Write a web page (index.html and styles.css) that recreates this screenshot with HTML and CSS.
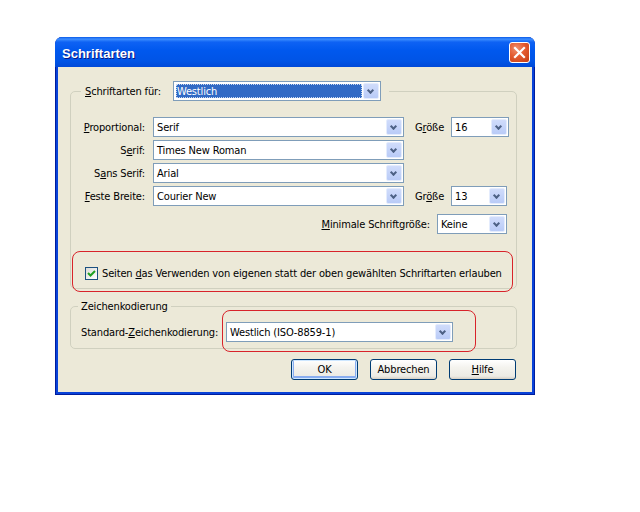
FILE: index.html
```html
<!DOCTYPE html>
<html lang="de">
<head>
  <meta charset="UTF-8">
  <title>Schriftarten</title>
  <link rel="stylesheet" href="styles.css">
</head>
<body>
  <div class="window">
    <div class="titlebar">
      <span class="title">Schriftarten</span>
      <span class="close-btn">
        <svg width="13" height="13" viewBox="0 0 13 13"><path d="M2 2 L11 11 M11 2 L2 11" stroke="#fff" stroke-width="2.2" stroke-linecap="square"/></svg>
      </span>
    </div>
    <div class="client">
      <fieldset class="group group-fonts">
        <legend class="legend-combo">
          <span class="lbl"><u>S</u>chriftarten für:</span>
          <div class="combo combo-lang focused"><span class="val"><span class="sel-text">Westlich</span></span><span class="drop"></span></div>
        </legend>
        <div class="font-grid">
          <span class="lbl right"><u>P</u>roportional:</span>
          <div class="combo combo-font"><span class="val">Serif</span><span class="drop"></span></div>
          <span class="lbl size-lbl">G<u>r</u>öße</span>
          <div class="combo combo-size"><span class="val">16</span><span class="drop"></span></div>

          <span class="lbl right">S<u>e</u>rif:</span>
          <div class="combo combo-font"><span class="val">Times New Roman</span><span class="drop"></span></div>
          <span></span><span></span>

          <span class="lbl right">S<u>a</u>ns Serif:</span>
          <div class="combo combo-font"><span class="val">Arial</span><span class="drop"></span></div>
          <span></span><span></span>

          <span class="lbl right"><u>F</u>este Breite:</span>
          <div class="combo combo-font"><span class="val">Courier New</span><span class="drop"></span></div>
          <span class="lbl size-lbl">Gr<u>ö</u>ße</span>
          <div class="combo combo-size small"><span class="val">13</span><span class="drop"></span></div>
        </div>
        <div class="min-row">
          <span class="lbl"><u>M</u>inimale Schriftgröße:</span>
          <div class="combo combo-min"><span class="val">Keine</span><span class="drop"></span></div>
        </div>
        <div class="check-row">
          <span class="checkbox">
            <svg width="9" height="9" viewBox="0 0 9 9"><path d="M1 4 L3.5 6.5 L8 2" fill="none" stroke="#21a121" stroke-width="2"/></svg>
          </span>
          <span class="lbl">Seiten <u>d</u>as Verwenden von eigenen statt der oben gewählten Schriftarten erlauben</span>
        </div>
      </fieldset>

      <fieldset class="group group-enc">
        <legend class="legend-text">Zeichenkodierung</legend>
        <div class="enc-row">
          <span class="lbl">Standard-<u>Z</u>eichenkodierung:</span>
          <div class="combo combo-enc"><span class="val">Westlich (ISO-8859-1)</span><span class="drop"></span></div>
        </div>
      </fieldset>

      <div class="buttons">
        <button class="btn default">OK</button>
        <button class="btn">Abbrechen</button>
        <button class="btn"><u>H</u>ilfe</button>
      </div>

      <!-- red markers drawn over the dialog -->
      <div class="mark mark-check"></div>
      <div class="mark mark-enc"></div>
    </div>
  </div>
</body>
</html>
```

FILE: styles.css
```css
body {
  margin: 0;
  padding: 37px 0 0 55px;
  background: #fff;
  font-family: "DejaVu Sans Condensed", "DejaVu Sans", sans-serif;
  font-stretch: condensed;
  font-size: 11px;
  letter-spacing: -0.15px;
  color: #000;
}
.window {
  width: 480px;
  height: 358px;
  box-sizing: border-box;
  background: #0842d8;
  border: 1px solid #001c9c;
  border-top: none;
  border-radius: 7px 7px 0 0;
  padding: 0 2px 2px 2px;
  display: flex;
  flex-direction: column;
}
.titlebar {
  height: 30px;
  margin: 0 -3px;
  border-radius: 7px 7px 0 0;
  background: linear-gradient(to bottom, #0a5ae8 0%, #3d8eff 7%, #0e62f4 17%, #0058ee 45%, #0054e6 80%, #0049d8 100%);
  display: flex;
  align-items: center;
  justify-content: space-between;
  padding: 0 5px 0 7px;
  box-sizing: border-box;
}
.title {
  font-family: "Liberation Sans", Arial, sans-serif;
  font-weight: bold;
  font-size: 13px;
  letter-spacing: 0;
  color: #fff;
  text-shadow: 1px 1px 0 #0a1883;
  padding-top: 2px;
}
.close-btn {
  width: 21px;
  height: 21px;
  box-sizing: border-box;
  border: 1px solid #fff;
  border-radius: 3px;
  background: radial-gradient(circle at 35% 30%, #f09070 0%, #e35b30 45%, #c43c14 100%);
  display: flex;
  align-items: center;
  justify-content: center;
  margin-top: 1px;
}
.client {
  flex: 1;
  background: #ece9d8;
  position: relative;
  padding: 14px 15px 0 12px;
}
.lbl {
  white-space: nowrap;
  line-height: 13px;
}
.lbl.right {
  text-align: right;
}

/* group boxes */
.group {
  margin: 0;
  border: 1px solid #d0d0bf;
  border-radius: 5px;
  padding: 0;
  min-width: 0;
}
.legend-combo {
  display: flex;
  align-items: center;
  gap: 12px;
  margin-left: 10px;
  padding: 0 8px 0 4px;
}
.legend-text {
  margin-left: 7px;
  padding: 0 3px;
  line-height: 13px;
  color: #000;
}

/* combo boxes */
.combo {
  height: 20px;
  box-sizing: border-box;
  border: 1px solid #7f9db9;
  background: #fff;
  display: flex;
  align-items: stretch;
}
.combo .val {
  flex: 1;
  padding-left: 3px;
  display: flex;
  align-items: center;
  white-space: nowrap;
  overflow: hidden;
}
.combo .drop {
  width: 16px;
  margin: 1px;
  border: 1px solid #e4ecfd;
  border-radius: 2px;
  box-sizing: border-box;
  background: linear-gradient(to bottom, #d0dcfb, #b9cbf7);
  position: relative;
}
.combo .drop::after {
  content: "";
  position: absolute;
  left: 4px;
  top: 4px;
  width: 3px;
  height: 3px;
  border-right: 2px solid #4d6185;
  border-bottom: 2px solid #4d6185;
  transform: rotate(45deg);
}
.combo-lang {
  width: 208px;
}
.combo-lang .val {
  margin: 2px 0 2px 2px;
  padding-left: 1px;
  background: #316ac5;
  color: #fff;
  outline: 1px dotted #c8d8f0;
  outline-offset: -1px;
}
.combo-font {
  width: 251px;
}
.combo-size {
  width: 58px;
}
.combo-size.small {
  width: 56px;
}
.combo-min {
  width: 70px;
}
.combo-enc {
  width: 227px;
}

/* font rows */
.font-grid {
  display: grid;
  grid-template-columns: 64px 251px 31px 58px;
  column-gap: 8px;
  row-gap: 3px;
  align-items: center;
  margin: 16px 0 0 10px;
}
.size-lbl {
  margin-left: 3px;
}
.min-row {
  display: flex;
  justify-content: flex-end;
  align-items: center;
  gap: 7px;
  margin: 8px 9px 0 0;
}
.check-row {
  display: flex;
  align-items: center;
  gap: 4px;
  margin: 33px 0 8px 14px;
}
.checkbox {
  width: 13px;
  height: 13px;
  box-sizing: border-box;
  border: 1px solid #1c5180;
  background: linear-gradient(135deg, #dcdcd7, #fff);
  display: flex;
  align-items: center;
  justify-content: center;
}

/* encoding group */
.group-enc {
  margin-top: 11px;
}
.enc-row {
  display: flex;
  align-items: center;
  gap: 10px;
  margin: 9px 0 6px 10px;
}
.enc-row .lbl {
  width: 135px;
}

/* buttons */
.buttons {
  display: flex;
  justify-content: flex-end;
  gap: 12px;
  margin: 10px 1px 0 0;
}
.btn {
  width: 67px;
  height: 21px;
  font: inherit;
  font-stretch: condensed;
  letter-spacing: inherit;
  color: #000;
  border: 1px solid #003c74;
  border-radius: 3px;
  background: linear-gradient(to bottom, #fff 0%, #f4f3ee 40%, #ecebe4 85%, #d6d0c5 100%);
  padding: 0;
}
.btn.default {
  box-shadow: inset 0 0 0 1px #cee7ff, inset 0 -1px 0 2px #89adf0;
}

/* red marker outlines */
.mark {
  position: absolute;
  border: 1px solid #d8232a;
  border-radius: 8px;
}
.mark-check {
  left: 14px;
  top: 184px;
  width: 439px;
  height: 39px;
}
.mark-enc {
  left: 164px;
  top: 243px;
  width: 252px;
  height: 40px;
}
```
